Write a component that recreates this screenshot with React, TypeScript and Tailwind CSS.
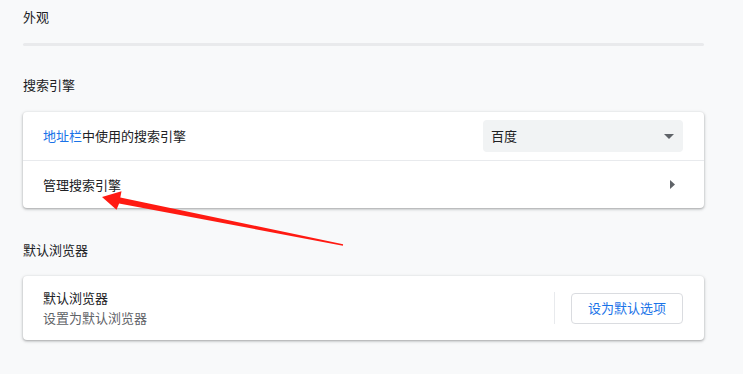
const Heading = ({ children }: { children: React.ReactNode }) => (
	<h2 className="text-[13px] leading-[20px] text-[#202124]">{children}</h2>
);

const App = () => {
	return (
		<div
			className="relative w-[743px] h-[374px] overflow-hidden bg-[#f8f9fa] px-[23px] pt-[7px]"
			style={{ fontFamily: '"Noto Sans CJK SC", "Noto Sans", sans-serif' }}
		>
			<div className="w-[681px] flex flex-col">
				<Heading>外观</Heading>
				<div className="mt-[16px] h-[3px] rounded-full bg-[#e9eaec]" />

				<div className="mt-[29px]">
					<Heading>搜索引擎</Heading>
				</div>
				<div className="mt-[17px] bg-white rounded-[4px] shadow-[0_1px_2px_rgba(60,64,67,0.3),0_1px_3px_1px_rgba(60,64,67,0.15)]">
					<div className="h-[48px] flex items-center justify-between pl-[20px] pr-[21px]">
						<p className="text-[13px] text-[#202124]">
							<span className="text-[#1a73e8]">地址栏</span>中使用的搜索引擎
						</p>
						<div className="w-[200px] h-[32px] rounded-[4px] bg-[#f1f3f4] flex items-center justify-between pl-[8px] pr-[9px]">
							<span className="text-[13px] text-[#202124]">百度</span>
							<svg width="10" height="5" viewBox="0 0 10 5">
								<path d="M0 0 L10 0 L5 5 Z" fill="#5f6368" />
							</svg>
						</div>
					</div>
					<div className="h-px bg-[#e8eaed]" />
					<div className="h-[47px] flex items-center justify-between pl-[20px] pr-[29px]">
						<p className="text-[13px] text-[#202124]">管理搜索引擎</p>
						<svg width="5" height="9" viewBox="0 0 5 9">
							<path d="M0 0 L5 4.5 L0 9 Z" fill="#5f6368" />
						</svg>
					</div>
				</div>

				<div className="mt-[32px]">
					<Heading>默认浏览器</Heading>
				</div>
				<div className="mt-[16px] h-[64px] bg-white rounded-[4px] shadow-[0_1px_2px_rgba(60,64,67,0.3),0_1px_3px_1px_rgba(60,64,67,0.15)] flex items-center pl-[20px] pr-[21px]">
					<div className="flex-1 flex flex-col">
						<p className="text-[13px] leading-[20px] text-[#202124]">默认浏览器</p>
						<p className="text-[13px] leading-[20px] text-[#5f6368]">设置为默认浏览器</p>
					</div>
					<div className="w-px h-[32px] bg-[#e8eaed] mr-[16px]" />
					<button className="w-[112px] h-[31px] rounded-[4px] border border-[#dadce0] bg-white text-[13px] text-[#1a73e8]">
						设为默认选项
					</button>
				</div>
			</div>

			<svg className="absolute left-0 top-0 pointer-events-none" width="743" height="374">
				<polygon
					points="102,197 121.5,191.2 120.3,197.6 343.1,244.3 342.9,245.7 119.1,203.6 116.5,209.8"
					fill="#ff1a12"
				/>
			</svg>
		</div>
	);
};

export default App;
